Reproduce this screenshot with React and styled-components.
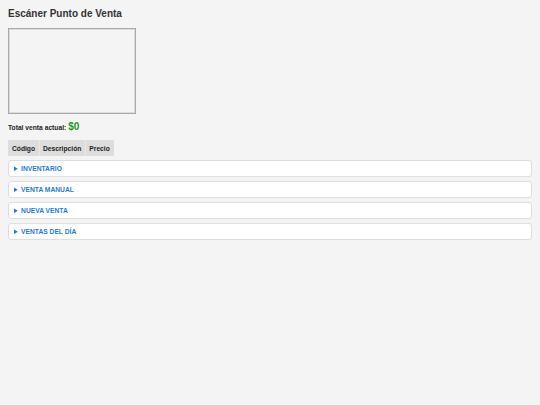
import React from "react";
import styled, { createGlobalStyle } from "styled-components";

const GlobalStyle = createGlobalStyle`
  html, body {
    margin: 0;
    padding: 0;
    background: #f4f4f4;
  }
  body {
    padding: 8px;
    font-family: "Liberation Sans", Arial, sans-serif;
    color: #333;
  }
`;

const Page = styled.div`
  display: flex;
  flex-direction: column;
`;

const Title = styled.h1`
  margin: 0 0 8px;
  font-size: 10px;
  line-height: 12px;
  font-weight: 700;
  color: #333;
`;

const Reader = styled.div`
  width: 128px;
  height: 86px;
  box-sizing: border-box;
  border: 1px solid #a8a8a8;
  box-shadow: inset 0 0 0 1px #dcdcdc;
  background: #f4f4f4;
`;

const TotalRow = styled.div`
  display: flex;
  align-items: baseline;
  gap: 2px;
  height: 12px;
  line-height: 12px;
  margin: 7px 0 7px;
`;

const TotalLabel = styled.span`
  font-size: 6.7px;
  font-weight: 700;
  color: #222;
`;

const TotalAmount = styled.span`
  font-size: 10px;
  font-weight: 700;
  color: #1f9b26;
`;

const Table = styled.table`
  border-collapse: collapse;
  border-spacing: 0;
  align-self: flex-start;
`;

const Th = styled.th`
  background: #dddddd;
  font-size: 6.7px;
  font-weight: 700;
  color: #222;
  height: 16px;
  padding: 0 4px;
  text-align: left;
  box-shadow: ${(p) => (p.$first ? "none" : "inset 1px 0 0 #e8e8e8")};
`;

const Sections = styled.div`
  display: flex;
  flex-direction: column;
  gap: 4px;
  margin-top: 4px;
`;

const Section = styled.details`
  background: #fff;
  border: 1px solid #dedede;
  border-radius: 3px;
`;

const Summary = styled.summary`
  padding: 3px 5px;
  font-size: 6.7px;
  line-height: 9px;
  font-weight: 700;
  color: #1f7ad6;
  cursor: pointer;
`;

const sections = ["INVENTARIO", "VENTA MANUAL", "NUEVA VENTA", "VENTAS DEL DÍA"];

export default function App() {
  return (
    <>
      <GlobalStyle />
      <Page>
        <Title>Escáner Punto de Venta</Title>
        <Reader />
        <TotalRow>
          <TotalLabel>Total venta actual:</TotalLabel>
          <TotalAmount>$0</TotalAmount>
        </TotalRow>
        <Table>
          <thead>
            <tr>
              <Th $first>Código</Th>
              <Th>Descripción</Th>
              <Th>Precio</Th>
            </tr>
          </thead>
        </Table>
        <Sections>
          {sections.map((s) => (
            <Section key={s}>
              <Summary>{s}</Summary>
            </Section>
          ))}
        </Sections>
      </Page>
    </>
  );
}
